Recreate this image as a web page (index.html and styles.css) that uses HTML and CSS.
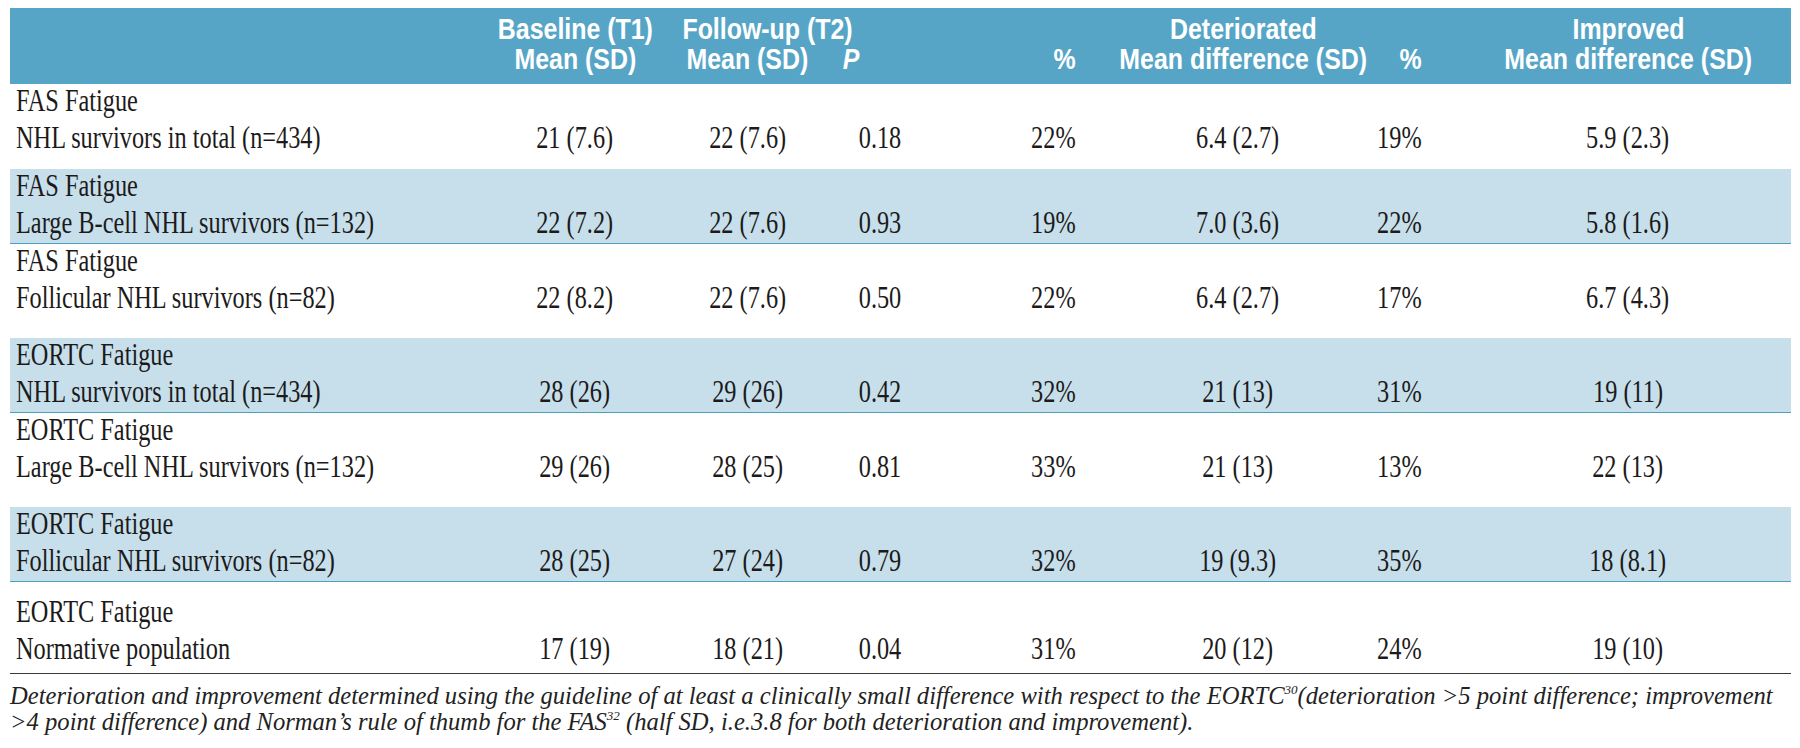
FILE: index.html
```html
<!DOCTYPE html>
<html lang="en">
<head>
<meta charset="utf-8">
<title>Fatigue table</title>
<link rel="stylesheet" href="styles.css">
</head>
<body>
<div class="page">
  <table class="tbl">
    <colgroup>
      <col class="c-label">
      <col class="c-base">
      <col class="c-fu">
      <col class="c-p">
      <col class="c-dpct">
      <col class="c-dmean">
      <col class="c-ipct">
      <col class="c-imean">
    </colgroup>
    <thead>
      <tr class="h1">
        <th></th>
        <th><div class="in c"><span class="t">Baseline (T1)</span></div></th>
        <th colspan="2" class="fu-top"><div class="in c"><span class="t">Follow-up (T2)</span></div></th>
        <th></th>
        <th class="dm"><div class="in c"><span class="t">Deteriorated</span></div></th>
        <th></th>
        <th class="im"><div class="in c"><span class="t">Improved</span></div></th>
      </tr>
      <tr class="h2">
        <th></th>
        <th><div class="in c"><span class="t">Mean (SD)</span></div></th>
        <th><div class="in c"><span class="t">Mean (SD)</span></div></th>
        <th class="ph"><div class="in c"><span class="t"><i>P</i></span></div></th>
        <th class="dp"><div class="in r"><span class="t">%</span></div></th>
        <th class="dm"><div class="in c"><span class="t">Mean difference (SD)</span></div></th>
        <th class="ip"><div class="in r"><span class="t">%</span></div></th>
        <th class="im"><div class="in c"><span class="t">Mean difference (SD)</span></div></th>
      </tr>
    </thead>
    <tbody>
      <tr class="row white first">
        <td class="lbl"><div class="in l col"><span class="t">FAS Fatigue</span><span class="t">NHL survivors in total (n=434)</span></div></td>
        <td class="num"><div class="in c"><span class="t">21 (7.6)</span></div></td>
        <td class="num"><div class="in c"><span class="t">22 (7.6)</span></div></td>
        <td class="num"><div class="in c"><span class="t">0.18</span></div></td>
        <td class="num dp"><div class="in r"><span class="t">22%</span></div></td>
        <td class="num dmd"><div class="in c"><span class="t">6.4 (2.7)</span></div></td>
        <td class="num ip"><div class="in r"><span class="t">19%</span></div></td>
        <td class="num im"><div class="in c"><span class="t">5.9 (2.3)</span></div></td>
      </tr>
      <tr class="row blue">
        <td class="lbl"><div class="in l col"><span class="t">FAS Fatigue</span><span class="t">Large B-cell NHL survivors (n=132)</span></div></td>
        <td class="num"><div class="in c"><span class="t">22 (7.2)</span></div></td>
        <td class="num"><div class="in c"><span class="t">22 (7.6)</span></div></td>
        <td class="num"><div class="in c"><span class="t">0.93</span></div></td>
        <td class="num dp"><div class="in r"><span class="t">19%</span></div></td>
        <td class="num dmd"><div class="in c"><span class="t">7.0 (3.6)</span></div></td>
        <td class="num ip"><div class="in r"><span class="t">22%</span></div></td>
        <td class="num im"><div class="in c"><span class="t">5.8 (1.6)</span></div></td>
      </tr>
      <tr class="row white">
        <td class="lbl"><div class="in l col"><span class="t">FAS Fatigue</span><span class="t">Follicular NHL survivors (n=82)</span></div></td>
        <td class="num"><div class="in c"><span class="t">22 (8.2)</span></div></td>
        <td class="num"><div class="in c"><span class="t">22 (7.6)</span></div></td>
        <td class="num"><div class="in c"><span class="t">0.50</span></div></td>
        <td class="num dp"><div class="in r"><span class="t">22%</span></div></td>
        <td class="num dmd"><div class="in c"><span class="t">6.4 (2.7)</span></div></td>
        <td class="num ip"><div class="in r"><span class="t">17%</span></div></td>
        <td class="num im"><div class="in c"><span class="t">6.7 (4.3)</span></div></td>
      </tr>
      <tr class="row blue">
        <td class="lbl"><div class="in l col"><span class="t">EORTC Fatigue</span><span class="t">NHL survivors in total (n=434)</span></div></td>
        <td class="num"><div class="in c"><span class="t">28 (26)</span></div></td>
        <td class="num"><div class="in c"><span class="t">29 (26)</span></div></td>
        <td class="num"><div class="in c"><span class="t">0.42</span></div></td>
        <td class="num dp"><div class="in r"><span class="t">32%</span></div></td>
        <td class="num dmd"><div class="in c"><span class="t">21 (13)</span></div></td>
        <td class="num ip"><div class="in r"><span class="t">31%</span></div></td>
        <td class="num im"><div class="in c"><span class="t">19 (11)</span></div></td>
      </tr>
      <tr class="row white">
        <td class="lbl"><div class="in l col"><span class="t">EORTC Fatigue</span><span class="t">Large B-cell NHL survivors (n=132)</span></div></td>
        <td class="num"><div class="in c"><span class="t">29 (26)</span></div></td>
        <td class="num"><div class="in c"><span class="t">28 (25)</span></div></td>
        <td class="num"><div class="in c"><span class="t">0.81</span></div></td>
        <td class="num dp"><div class="in r"><span class="t">33%</span></div></td>
        <td class="num dmd"><div class="in c"><span class="t">21 (13)</span></div></td>
        <td class="num ip"><div class="in r"><span class="t">13%</span></div></td>
        <td class="num im"><div class="in c"><span class="t">22 (13)</span></div></td>
      </tr>
      <tr class="row blue">
        <td class="lbl"><div class="in l col"><span class="t">EORTC Fatigue</span><span class="t">Follicular NHL survivors (n=82)</span></div></td>
        <td class="num"><div class="in c"><span class="t">28 (25)</span></div></td>
        <td class="num"><div class="in c"><span class="t">27 (24)</span></div></td>
        <td class="num"><div class="in c"><span class="t">0.79</span></div></td>
        <td class="num dp"><div class="in r"><span class="t">32%</span></div></td>
        <td class="num dmd"><div class="in c"><span class="t">19 (9.3)</span></div></td>
        <td class="num ip"><div class="in r"><span class="t">35%</span></div></td>
        <td class="num im"><div class="in c"><span class="t">18 (8.1)</span></div></td>
      </tr>
      <tr class="row white last">
        <td class="lbl"><div class="in l col"><span class="t">EORTC Fatigue</span><span class="t">Normative population</span></div></td>
        <td class="num"><div class="in c"><span class="t">17 (19)</span></div></td>
        <td class="num"><div class="in c"><span class="t">18 (21)</span></div></td>
        <td class="num"><div class="in c"><span class="t">0.04</span></div></td>
        <td class="num dp"><div class="in r"><span class="t">31%</span></div></td>
        <td class="num dmd"><div class="in c"><span class="t">20 (12)</span></div></td>
        <td class="num ip"><div class="in r"><span class="t">24%</span></div></td>
        <td class="num im"><div class="in c"><span class="t">19 (10)</span></div></td>
      </tr>
    </tbody>
  </table>
  <div class="note">
    <div class="nl">Deterioration and improvement determined using the guideline of at least a clinically small difference with respect to the EORTC<sup>30</sup>(deterioration &gt;5 point difference; improvement</div>
    <div class="nl">&gt;4 point difference) and Norman’s rule of thumb for the FAS<sup>32</sup> (half SD, i.e.3.8 for both deterioration and improvement).</div>
  </div>
</div>
</body>
</html>
```

FILE: styles.css
```css
html, body {
  margin: 0;
  padding: 0;
  background: #ffffff;
  overflow: hidden;
}

.page {
  padding: 8px 9px 0 10px;
}

.tbl {
  width: 1781px;
  border-collapse: separate;
  border-spacing: 0;
  table-layout: fixed;
  font-family: "Liberation Serif", "Times New Roman", serif;
  color: #1c1a1a;
}

.c-label { width: 460px; }
.c-base  { width: 210px; }
.c-fu    { width: 135px; }
.c-p     { width: 130px; }
.c-dpct  { width: 135px; }
.c-dmean { width: 285px; }
.c-ipct  { width: 65px; }
.c-imean { width: 361px; }

/* generic cell content */
.in {
  display: flex;
  white-space: nowrap;
}
.in.c { justify-content: center; }
.in.l { justify-content: flex-start; }
.in.r { justify-content: flex-end; }
.in.col { flex-direction: column; align-items: flex-start; }

.t {
  display: inline-block;
  flex: none;
}
.in.c .t { transform-origin: center center; }
.in.l .t { transform-origin: left center; }
.in.r .t { transform-origin: right center; }

/* header */
.tbl thead th {
  background: #57a5c6;
  color: #ffffff;
  font-family: "Liberation Sans", Arial, sans-serif;
  font-weight: bold;
  font-size: 30px;
  line-height: 30px;
  padding: 0;
}
.tbl thead .t { transform: scaleX(0.83); }
.tbl .h1 th { height: 36px; padding-top: 5px; vertical-align: bottom; box-sizing: border-box; }
.tbl .h2 th { height: 40px; padding-bottom: 10px; vertical-align: top; box-sizing: border-box; }

.tbl th.fu-top { padding-right: 91px; }
.tbl th.ph { padding-right: 58px; }
.tbl th.dp { padding-right: 4px; }
.tbl th.ip { padding-right: 8px; }
.tbl th.dm { padding-left: 42px; }
.tbl th.im { padding-left: 35px; }

/* body rows */
.row td {
  padding: 0;
  vertical-align: top;
  font-size: 32px;
  line-height: 37px;
}
.row .t { transform: scaleX(0.76); }
.row td .in { margin-top: -2px; }

.row.white { height: 94px; }
.row.blue { height: 75px; }
.row.white.first { height: 85px; }
.row.blue td {
  background: #c6dfeb;
  border-bottom: 1px solid #4f9fc2;
}
.row.white.last { height: 92px; }
.row.last td {
  padding-top: 13px;
  border-bottom: 1px solid #3a3a3a;
}

.row td.lbl { padding-left: 6px; }
.row td.num .in { padding-top: 37px; }
.row td.dp { padding-right: 4px; }
.row td.ip { padding-right: 8px; }
.row td.dmd { padding-left: 30px; }
.row td.im { padding-left: 35px; }

/* footnote */
.note {
  padding-top: 9px;
  font-family: "Liberation Serif", "Times New Roman", serif;
  font-style: italic;
  font-size: 24.6px;
  line-height: 26px;
  color: #222222;
}
.nl {
  white-space: nowrap;
  width: max-content;
}
.note sup {
  font-size: 13px;
  line-height: 0;
  vertical-align: 10px;
}
```
